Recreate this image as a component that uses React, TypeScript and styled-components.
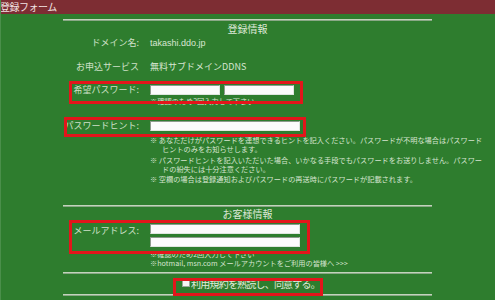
import React from 'react';
import styled, { createGlobalStyle } from 'styled-components';

const GlobalStyle = createGlobalStyle`
  html, body {
    margin: 0;
    padding: 0;
    background: #2e7d2e;
  }
  body {
    font-family: "Noto Sans CJK JP", "Liberation Sans", sans-serif;
  }
`;

const Page = styled.div`
  position: relative;
  width: 495px;
  height: 300px;
  overflow: hidden;
  background: #2e7d2e;
  border-left: 1px solid #4a8f4a;
  box-sizing: border-box;
`;

const Header = styled.div`
  height: 14px;
  line-height: 14px;
  background: #7d2d33;
  color: #f2e4e4;
  font-size: 10px;
  letter-spacing: -0.5px;
  margin-left: -1px;
`;

const Body = styled.div`
  margin-left: 62px;
  width: 369px;
`;

const Rule = styled.div<{ $top: number }>`
  margin-top: ${p => p.$top}px;
  height: 0;
  border-top: 1px solid #c2d4bc;
  border-bottom: 1px solid #8aa886;
`;

const SectionTitle = styled.div<{ $h: number }>`
  height: ${p => p.$h}px;
  line-height: ${p => p.$h}px;
  text-align: center;
  color: #dce8d6;
  font-size: 10px;
`;

const Row = styled.div<{ $top: number; $h?: number }>`
  display: grid;
  grid-template-columns: 76px 340px;
  column-gap: 11px;
  margin-top: ${p => p.$top}px;
  min-height: ${p => p.$h ?? 14}px;
  align-items: center;
`;

const Label = styled.div`
  text-align: right;
  color: #cfe0c8;
  font-size: 9px;
  line-height: 14px;
  white-space: nowrap;
  align-self: start;
`;

const Value = styled.div`
  color: #d8e6d2;
  font-size: 9px;
  line-height: 14px;
  white-space: nowrap;
`;

const Latin = styled.span`
  font-family: "Liberation Sans", "Noto Sans CJK JP", sans-serif;
`;

const Inputs = styled.div<{ $column?: boolean }>`
  display: flex;
  flex-direction: ${p => (p.$column ? 'column' : 'row')};
  gap: ${p => (p.$column ? 3 : 4)}px;
`;

const TextBox = styled.div<{ $w: number }>`
  width: ${p => p.$w}px;
  height: 10px;
  box-sizing: border-box;
  background: #fbfbfb;
  border-top: 1px solid #8d9a8d;
  border-left: 1px solid #8d9a8d;
  border-right: 1px solid #dfe6df;
  border-bottom: 1px solid #dfe6df;
`;

const Notes = styled.div<{ $top: number }>`
  margin-top: ${p => p.$top}px;
  margin-left: 87px;
  width: 345px;
`;

const Note = styled.div<{ $gap?: number; $hang?: boolean }>`
  margin-top: ${p => p.$gap ?? 0}px;
  color: #d6e4d0;
  font-size: 7.2px;
  line-height: 8.4px;
  white-space: nowrap;
  padding-left: ${p => (p.$hang ? 12 : 0)}px;
  text-indent: ${p => (p.$hang ? -12 : 0)}px;
`;

const Agree = styled.label`
  display: flex;
  align-items: center;
  justify-content: center;
  gap: 1px;
  margin-top: 2px;
  height: 14px;
  color: #e2ecdc;
  font-size: 10px;
  letter-spacing: -0.8px;
  padding-left: 7px;
`;

const CheckSquare = styled.span`
  display: inline-block;
  width: 8px;
  height: 8px;
  box-sizing: border-box;
  background: #f4f4f4;
  border: 1px solid #9aa89a;
`;

const Highlight = styled.div<{ $x: number; $y: number; $w: number; $h: number }>`
  position: absolute;
  left: ${p => p.$x}px;
  top: ${p => p.$y}px;
  width: ${p => p.$w}px;
  height: ${p => p.$h}px;
  box-sizing: border-box;
  border: 3px solid #e3161b;
  pointer-events: none;
`;

const boxes = [
  { x: 68, y: 81, w: 234, h: 23 },
  { x: 63, y: 117, w: 242, h: 20 },
  { x: 68, y: 220, w: 241, h: 34 },
  { x: 172, y: 278, w: 150, h: 18 },
];

const App: React.FC = () => {
  return (
    <Page>
      <GlobalStyle />
      <Header>登録フォーム</Header>
      <Body>
        <Rule $top={5} />
        <SectionTitle $h={15}>登録情報</SectionTitle>

        <Row $top={0}>
          <Label>ドメイン名:</Label>
          <Value>
            <Latin>takashi.ddo.jp</Latin>
          </Value>
        </Row>
        <Row $top={10}>
          <Label>お申込サービス</Label>
          <Value>無料サブドメインDDNS</Value>
        </Row>

        <Row $top={9}>
          <Label>希望パスワード:</Label>
          <Inputs>
            <TextBox $w={70} />
            <TextBox $w={70} />
          </Inputs>
        </Row>
        <Notes $top={0}>
          <Note>※確認のため2回入力して下さい</Note>
        </Notes>

        <Row $top={14}>
          <Label>パスワードヒント:</Label>
          <Inputs>
            <TextBox $w={150} />
          </Inputs>
        </Row>
        <Notes $top={3}>
          <Note $hang>
            ※ あなただけがパスワードを連想できるヒントを記入ください。パスワードが不明な場合はパスワード
            <br />
            ヒントのみをお知らせします。
          </Note>
          <Note $hang $gap={3}>
            ※ パスワードヒントを記入いただいた場合、いかなる手段でもパスワードをお送りしません。パスワー
            <br />
            ドの紛失には十分注意ください。
          </Note>
          <Note $hang $gap={2}>
            ※ 空欄の場合は登録通知およびパスワードの再送時にパスワードが記載されます。
          </Note>
        </Notes>

        <Rule $top={22} />
        <SectionTitle $h={14}>お客様情報</SectionTitle>

        <Row $top={3} $h={23}>
          <Label>メールアドレス:</Label>
          <Inputs $column>
            <TextBox $w={150} />
            <TextBox $w={150} />
          </Inputs>
        </Row>
        <Notes $top={3}>
          <Note>※確認のため2回入力して下さい</Note>
          <Note>※hotmail, msn.com メールアカウントをご利用の皆様へ &gt;&gt;&gt;</Note>
        </Notes>

        <Rule $top={5} />
        <Agree>
          <CheckSquare />
          利用規約を熟読し、同意する。
        </Agree>
        <Rule $top={4} />
      </Body>

      {boxes.map((b, i) => (
        <Highlight key={i} $x={b.x} $y={b.y} $w={b.w} $h={b.h} />
      ))}
    </Page>
  );
};

export default App;
